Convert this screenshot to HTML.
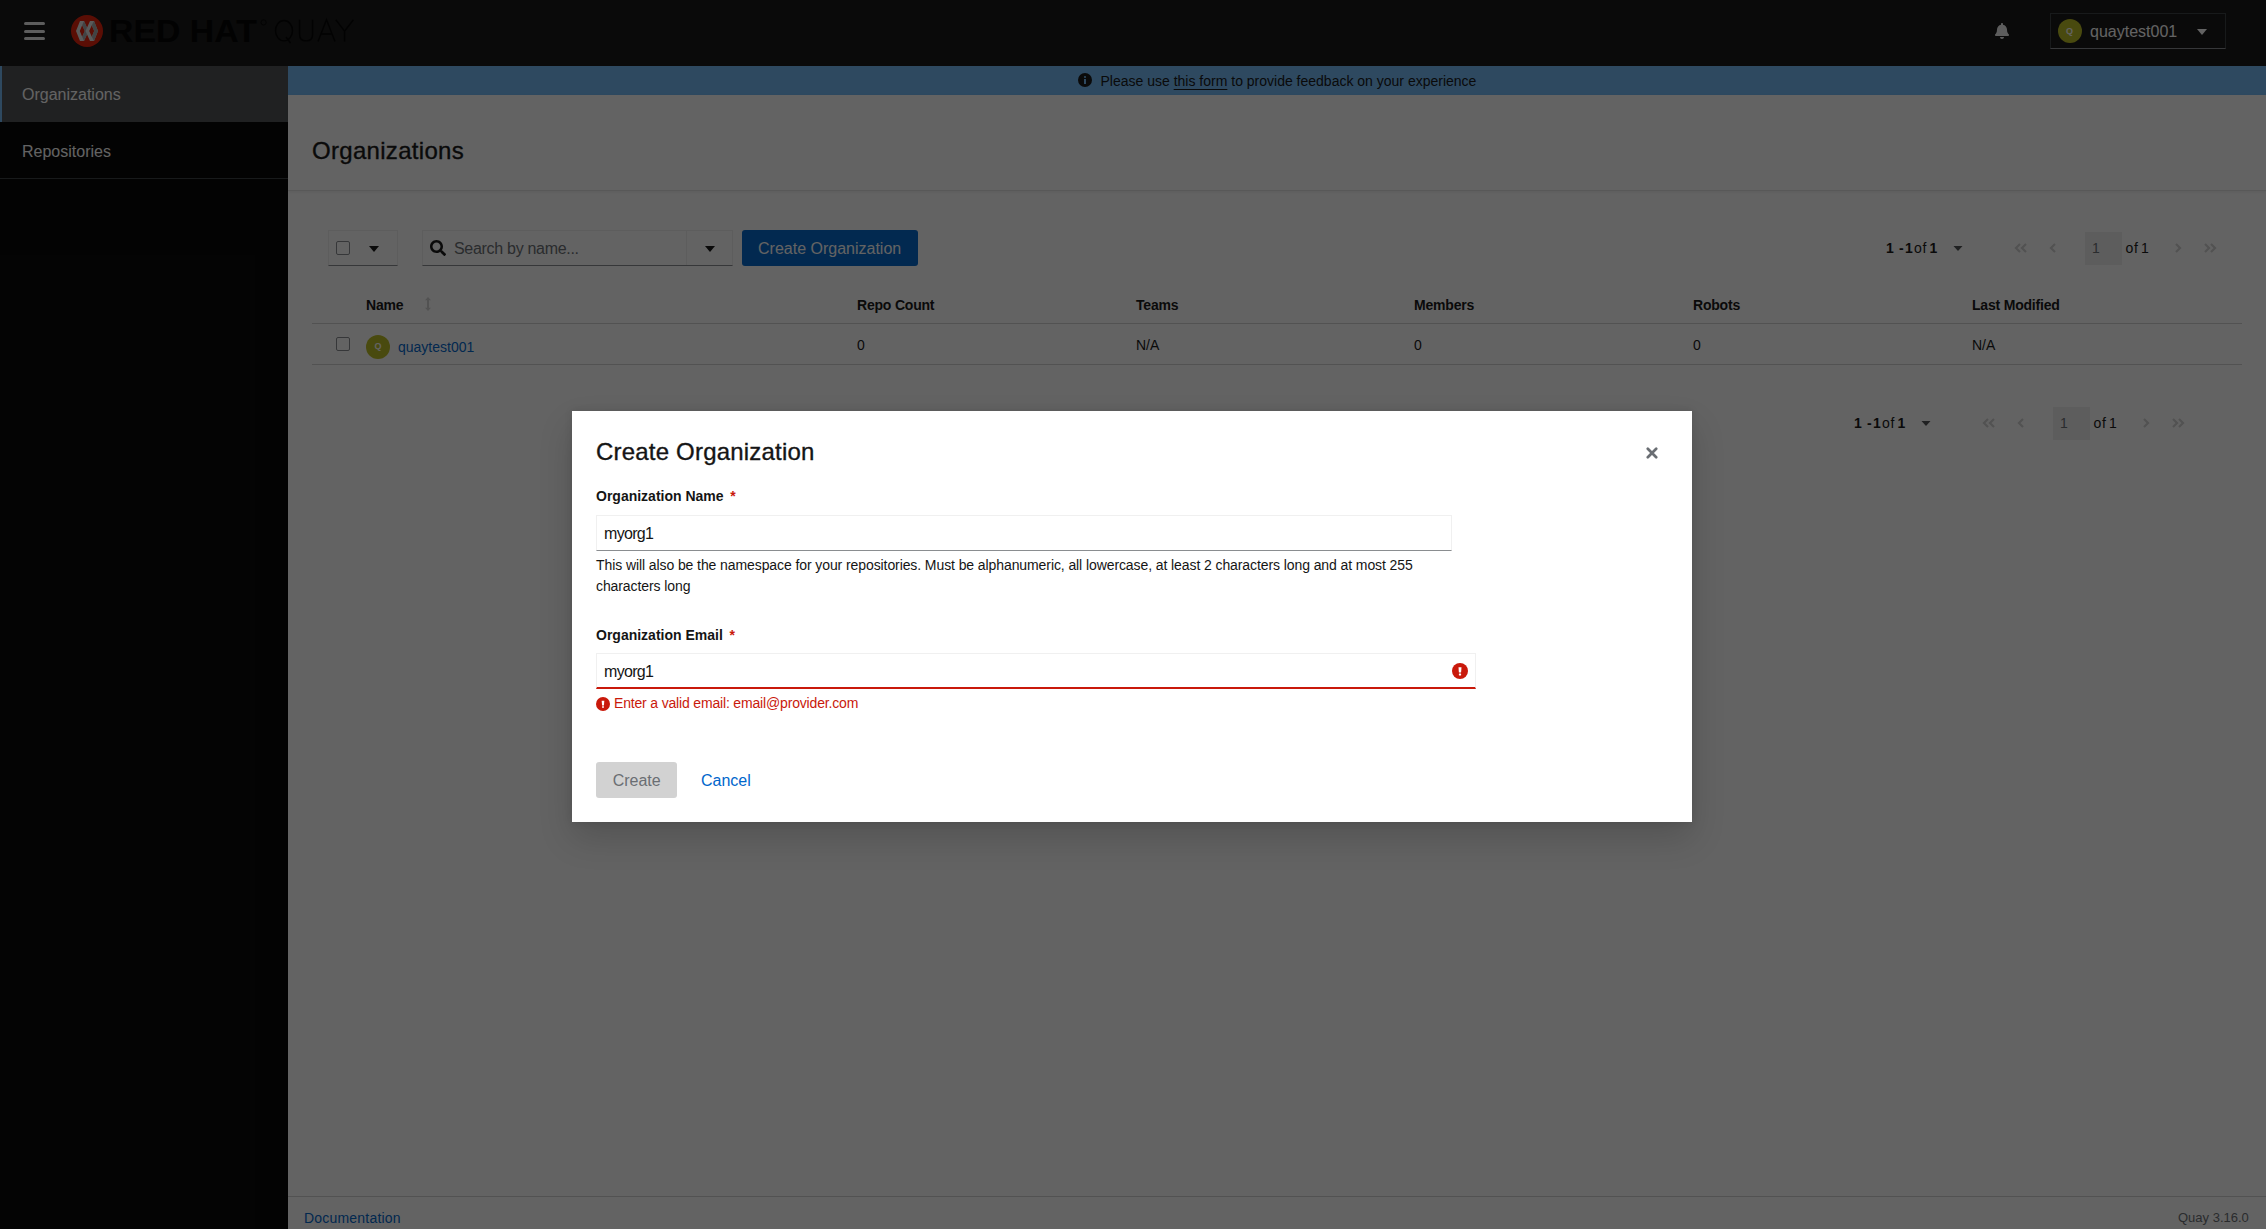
<!DOCTYPE html>
<html><head><meta charset="utf-8"><title>Quay</title>
<style>
*{box-sizing:border-box;margin:0;padding:0}
html,body{width:2266px;height:1229px;overflow:hidden;background:#fff;font-family:"Liberation Sans",sans-serif;color:#151515}
.a{position:absolute}
.t{position:absolute;white-space:nowrap;line-height:1}
#mast{left:0;top:0;width:2266px;height:66px;background:#151515}
#side{left:0;top:66px;width:288px;height:1163px;background:#050505}
#banner{left:288px;top:66px;width:1978px;height:29px;background:#73bcf7}
#titlesec{left:288px;top:95px;width:1978px;height:96px;background:#fff;border-bottom:1px solid #e2e2e2;box-shadow:0 1px 3px rgba(3,3,3,.08)}
#footer{left:288px;top:1196px;width:1978px;height:33px;border-top:1px solid #d2d2d2;background:#fff}
#backdrop{left:0;top:0;width:2266px;height:1229px;background:rgba(3,3,3,.62)}
#modal{left:572px;top:411px;width:1120px;height:411px;background:#fff;box-shadow:0 16px 32px 0 rgba(3,3,3,.16),0 0 8px 0 rgba(3,3,3,.1)}
.cb{position:absolute;width:14px;height:14px;border:1px solid #8a8d90;border-radius:2px;background:#fff}
.hdr{font-size:14px;font-weight:700;letter-spacing:-.2px}
.cell{font-size:14px}
</style></head><body>
<!-- masthead -->
<div id="mast" class="a">
  <div class="a" style="left:23.5px;top:22px;width:21px;height:3px;border-radius:1.5px;background:#f0f0f0"></div>
  <div class="a" style="left:23.5px;top:29.5px;width:21px;height:3px;border-radius:1.5px;background:#f0f0f0"></div>
  <div class="a" style="left:23.5px;top:37px;width:21px;height:3px;border-radius:1.5px;background:#f0f0f0"></div>
  <svg class="a" style="left:66px;top:10px" width="300" height="40" viewBox="0 0 300 40">
    <circle cx="21" cy="21" r="16" fill="#e8200a"/>
    <path d="M10 21L14 11H18L22.5 21L18 31H14ZM13.8 21L16.2 15.2L18.8 21L16.2 26.8Z" fill="#e8e8e8" fill-rule="evenodd"/>
    <path d="M18 11L22.5 21L18 31L16.2 26.8L18.8 21L16.2 15.2Z" fill="#a9abad"/>
    <path d="M32 21L28 11H24L19.5 21L24 31H28ZM28.2 21L25.8 15.2L23.2 21L25.8 26.8Z" fill="#e8e8e8" fill-rule="evenodd"/>
    <path d="M28 11L32 21L28 31L25.8 26.8L28.2 21L25.8 15.2Z" fill="#a9abad"/>
    <text x="43" y="31.6" font-family="Liberation Sans" font-weight="700" font-size="30.5" textLength="147.8" lengthAdjust="spacingAndGlyphs" fill="#000">RED HAT</text>
    <circle cx="197.6" cy="12.4" r="2.6" fill="none" stroke="#000" stroke-width="0.8"/>
    <g fill="none" stroke="#000" stroke-width="1.4">
      <ellipse cx="218" cy="20.7" rx="8.5" ry="10.2"/>
      <path d="M220 27L224.5 33"/>
      <path d="M233.6 9.8V24.5Q233.6 30.9 240.1 30.9Q246.6 30.9 246.6 24.5V9.8"/>
      <path d="M252 31.6L260.5 9.8L269 31.6M255.2 24H265.8"/>
      <path d="M269.8 9.8L278.6 21.2L287.4 9.8M278.6 21.2V31.6"/>
    </g>
  </svg>
  <svg class="a" style="left:1995px;top:23px" width="14" height="16" viewBox="0 0 448 512"><path fill="#f0f0f0" d="M224 512c35.32 0 63.97-28.65 63.97-64H160.03c0 35.35 28.65 64 63.97 64zm215.39-149.71c-19.32-20.76-55.47-51.99-55.47-154.29 0-77.7-54.48-139.9-127.94-155.16V32c0-17.67-14.32-32-31.98-32s-31.98 14.33-31.98 32v20.84C118.56 68.1 64.08 130.3 64.08 208c0 102.3-36.15 133.53-55.47 154.29-6 6.45-8.66 14.16-8.61 21.71.11 16.4 12.98 32 32.1 32h383.8c19.12 0 32-15.6 32.1-32 .05-7.55-2.61-15.27-8.61-21.71z"/></svg>
  <div class="a" style="left:2050px;top:13px;width:176px;height:36px;border:1px solid #3c3f42;border-bottom-color:#8a8d90"></div>
  <div class="a" style="left:2058px;top:19px;width:24px;height:24px;border-radius:50%;background:#bcbd22"></div>
  <div class="t" style="left:2066px;top:27px;font-size:9px;color:#fff;font-weight:700">Q</div>
  <div class="t" style="left:2090px;top:24px;font-size:16px;color:#fff">quaytest001</div>
  <svg class="a" style="left:2197px;top:29px" width="10" height="6" viewBox="0 0 10 6"><path d="M0 0H10L5 6Z" fill="#fff"/></svg>
</div>
<!-- sidebar -->
<div id="side" class="a">
  <div class="a" style="left:0;top:0;width:288px;height:56px;background:#4f5255"></div>
  <div class="a" style="left:0;top:0;width:2px;height:56px;background:#73bcf7"></div>
  <div class="t" style="left:22px;top:21px;font-size:16px;color:#fff">Organizations</div>
  <div class="t" style="left:22px;top:77.5px;font-size:16px;color:#fff">Repositories</div>
  <div class="a" style="left:0;top:112px;width:288px;height:1px;background:#3c3f42"></div>
</div>
<!-- banner -->
<div id="banner" class="a">
  <svg class="a" style="left:790px;top:7px" width="14" height="14" viewBox="0 0 14 14"><circle cx="7" cy="7" r="7" fill="#151515"/><rect x="6" y="6" width="2" height="5" fill="#73bcf7"/><circle cx="7" cy="4" r="1.1" fill="#73bcf7"/></svg>
  <div class="t" style="left:812.5px;top:8px;font-size:14px">Please use <span style="text-decoration:underline;text-underline-offset:3px">this form</span> to provide feedback on your experience</div>
</div>
<!-- title -->
<div id="titlesec" class="a">
  <div class="t" style="left:24px;top:43.7px;font-size:24px;letter-spacing:.3px;-webkit-text-stroke:.35px #151515">Organizations</div>
</div>
<!-- toolbar -->
<div class="a" style="left:328px;top:230px;width:70px;height:36px;border:1px solid #f0f0f0;border-bottom-color:#8a8d90"></div>
<div class="cb" style="left:336px;top:241px"></div>
<svg class="a" style="left:369px;top:246px" width="10" height="6" viewBox="0 0 10 6"><path d="M0 0H10L5 6Z" fill="#151515"/></svg>
<div class="a" style="left:422px;top:230px;width:311px;height:36px;border:1px solid #f0f0f0;border-bottom-color:#8a8d90"></div>
<div class="a" style="left:686px;top:231px;width:1px;height:34px;background:#f0f0f0"></div>
<svg class="a" style="left:430px;top:240px" width="16" height="16" viewBox="0 0 512 512"><path fill="#151515" d="M505 442.7L405.3 343c-4.5-4.5-10.6-7-17-7H372c27.6-35.3 44-79.7 44-128C416 93.1 322.9 0 208 0S0 93.1 0 208s93.1 208 208 208c48.3 0 92.7-16.4 128-44v16.3c0 6.4 2.5 12.5 7 17l99.7 99.7c9.4 9.4 24.6 9.4 33.9 0l28.3-28.3c9.4-9.4 9.4-24.6.1-34zM208 336c-70.7 0-128-57.2-128-128 0-70.7 57.2-128 128-128 70.7 0 128 57.2 128 128 0 70.7-57.2 128-128 128z"/></svg>
<div class="t" style="left:454px;top:240.7px;font-size:16px;color:#6a6e73;letter-spacing:-.3px">Search by name...</div>
<svg class="a" style="left:705px;top:246px" width="10" height="6" viewBox="0 0 10 6"><path d="M0 0H10L5 6Z" fill="#151515"/></svg>
<div class="a" style="left:742px;top:230px;width:176px;height:36px;background:#0066cc;border-radius:3px"></div>
<div class="t" style="left:758px;top:240.5px;font-size:16px;color:#fff">Create Organization</div>

<!-- pagination top -->
<div id="pg1" class="a" style="left:0;top:0">
  <div class="t" style="left:1886px;top:241.2px;font-size:14px;font-weight:700">1</div>
  <div class="t" style="left:1899px;top:241.2px;font-size:14px;font-weight:700">-</div>
  <div class="t" style="left:1905px;top:241.2px;font-size:14px;font-weight:700">1</div>
  <div class="t" style="left:1914px;top:241.2px;font-size:14px;letter-spacing:.6px">of</div>
  <div class="t" style="left:1929.5px;top:241.2px;font-size:14px;font-weight:700">1</div>
  <svg class="a" style="left:1953px;top:246px" width="10" height="5" viewBox="0 0 10 5"><path d="M0.5 0H9.5L5 5Z" fill="#4f5255"/></svg>
  <svg class="a" style="left:2014px;top:243px" width="14" height="10" viewBox="0 0 14 10"><path d="M6 1L2 5L6 9M12 1L8 5L12 9" fill="none" stroke="#d2d2d2" stroke-width="2.2"/></svg>
  <svg class="a" style="left:2049px;top:243px" width="8" height="10" viewBox="0 0 8 10"><path d="M6 1L2 5L6 9" fill="none" stroke="#d2d2d2" stroke-width="2.2"/></svg>
  <div class="a" style="left:2085px;top:232px;width:37px;height:33px;background:#f0f0f0"></div>
  <div class="t" style="left:2092px;top:241.2px;font-size:14px;color:#6a6e73">1</div>
  <div class="t" style="left:2125.5px;top:241.2px;font-size:14px;letter-spacing:.6px">of</div>
  <div class="t" style="left:2141px;top:241.2px;font-size:14px">1</div>
  <svg class="a" style="left:2174px;top:243px" width="8" height="10" viewBox="0 0 8 10"><path d="M2 1L6 5L2 9" fill="none" stroke="#d2d2d2" stroke-width="2.2"/></svg>
  <svg class="a" style="left:2203px;top:243px" width="14" height="10" viewBox="0 0 14 10"><path d="M2 1L6 5L2 9M8 1L12 5L8 9" fill="none" stroke="#d2d2d2" stroke-width="2.2"/></svg>
</div>
</div>

<!-- table -->
<div class="t hdr" style="left:366px;top:298.2px">Name</div>
<svg class="a" style="left:425px;top:297px" width="6" height="14" viewBox="0 0 6 14"><path d="M3 0L6 3.2H4V10.8H6L3 14L0 10.8H2V3.2H0Z" fill="#d2d2d2"/></svg>
<div class="t hdr" style="left:857px;top:298.2px">Repo Count</div>
<div class="t hdr" style="left:1136px;top:298.2px">Teams</div>
<div class="t hdr" style="left:1414px;top:298.2px">Members</div>
<div class="t hdr" style="left:1693px;top:298.2px">Robots</div>
<div class="t hdr" style="left:1972px;top:298.2px">Last Modified</div>
<div class="a" style="left:312px;top:323px;width:1930px;height:1px;background:#d2d2d2"></div>
<div class="cb" style="left:336px;top:337px"></div>
<div class="a" style="left:366px;top:335px;width:24px;height:24px;border-radius:50%;background:#bcbd22"></div>
<div class="t" style="left:374.5px;top:342px;font-size:9px;color:#fff;font-weight:700">Q</div>
<div class="t cell" style="left:398px;top:340.1px;color:#0066cc">quaytest001</div>
<div class="t cell" style="left:857px;top:338.1px">0</div>
<div class="t cell" style="left:1136px;top:338.1px">N/A</div>
<div class="t cell" style="left:1414px;top:338.1px">0</div>
<div class="t cell" style="left:1693px;top:338.1px">0</div>
<div class="t cell" style="left:1972px;top:338.1px">N/A</div>
<div class="a" style="left:312px;top:364px;width:1930px;height:1px;background:#d2d2d2"></div>

<!-- pagination bottom -->
<div id="pg2" class="a" style="left:-32px;top:175px">
  <div class="t" style="left:1886px;top:241.2px;font-size:14px;font-weight:700">1</div>
  <div class="t" style="left:1899px;top:241.2px;font-size:14px;font-weight:700">-</div>
  <div class="t" style="left:1905px;top:241.2px;font-size:14px;font-weight:700">1</div>
  <div class="t" style="left:1914px;top:241.2px;font-size:14px;letter-spacing:.6px">of</div>
  <div class="t" style="left:1929.5px;top:241.2px;font-size:14px;font-weight:700">1</div>
  <svg class="a" style="left:1953px;top:246px" width="10" height="5" viewBox="0 0 10 5"><path d="M0.5 0H9.5L5 5Z" fill="#4f5255"/></svg>
  <svg class="a" style="left:2014px;top:243px" width="14" height="10" viewBox="0 0 14 10"><path d="M6 1L2 5L6 9M12 1L8 5L12 9" fill="none" stroke="#d2d2d2" stroke-width="2.2"/></svg>
  <svg class="a" style="left:2049px;top:243px" width="8" height="10" viewBox="0 0 8 10"><path d="M6 1L2 5L6 9" fill="none" stroke="#d2d2d2" stroke-width="2.2"/></svg>
  <div class="a" style="left:2085px;top:232px;width:37px;height:33px;background:#f0f0f0"></div>
  <div class="t" style="left:2092px;top:241.2px;font-size:14px;color:#6a6e73">1</div>
  <div class="t" style="left:2125.5px;top:241.2px;font-size:14px;letter-spacing:.6px">of</div>
  <div class="t" style="left:2141px;top:241.2px;font-size:14px">1</div>
  <svg class="a" style="left:2174px;top:243px" width="8" height="10" viewBox="0 0 8 10"><path d="M2 1L6 5L2 9" fill="none" stroke="#d2d2d2" stroke-width="2.2"/></svg>
  <svg class="a" style="left:2203px;top:243px" width="14" height="10" viewBox="0 0 14 10"><path d="M2 1L6 5L2 9M8 1L12 5L8 9" fill="none" stroke="#d2d2d2" stroke-width="2.2"/></svg>
</div>
</div>

<!-- footer -->
<div id="footer" class="a">
  <div class="t" style="left:16px;top:14px;font-size:14px;color:#0066cc;letter-spacing:.2px">Documentation</div>
  <div class="t" style="left:1890px;top:14px;font-size:13px;color:#6a6e73">Quay 3.16.0</div>
</div>

<div id="backdrop" class="a"></div>

<!-- modal -->
<div id="modal" class="a">
  <div class="t" style="left:24px;top:29.4px;font-size:24px;letter-spacing:.2px;-webkit-text-stroke:.35px #151515">Create Organization</div>
  <svg class="a" style="left:1074px;top:36px" width="12" height="12" viewBox="0 0 12 12"><path d="M1.8 1.8L10.2 10.2M10.2 1.8L1.8 10.2" stroke="#6a6e73" stroke-width="2.7" stroke-linecap="round"/></svg>
  <div class="t" style="left:24px;top:77.7px;font-size:14px;font-weight:700">Organization Name <span style="color:#c9190b;margin-left:2.7px">*</span></div>
  <div class="a" style="left:24px;top:104px;width:856px;height:36px;border:1px solid #f0f0f0;border-bottom-color:#8a8d90"></div>
  <div class="t" style="left:32px;top:114.5px;font-size:16px;letter-spacing:-.7px">myorg1</div>
  <div class="t" style="left:24px;top:144px;font-size:14px;line-height:21px;white-space:normal;width:900px;letter-spacing:-.09px">This will also be the namespace for your repositories. Must be alphanumeric, all lowercase, at least 2 characters long and at most 255<br>characters long</div>
  <div class="t" style="left:24px;top:216.5px;font-size:14px;font-weight:700">Organization Email <span style="color:#c9190b;margin-left:2.7px">*</span></div>
  <div class="a" style="left:24px;top:242px;width:880px;height:36px;border:1px solid #f0f0f0;border-bottom:2px solid #c9190b"></div>
  <div class="t" style="left:32px;top:252.5px;font-size:16px;letter-spacing:-.7px">myorg1</div>
  <svg class="a" style="left:880px;top:252px" width="16" height="16" viewBox="0 0 16 16"><circle cx="8" cy="8" r="8" fill="#c9190b"/><path d="M6.5 4.3H9.5L9.1 9.6H6.9Z" fill="#fff"/><rect x="6.9" y="10.6" width="2.2" height="1.8" rx=".3" fill="#fff"/></svg>
  <svg class="a" style="left:24px;top:285.5px" width="14" height="14" viewBox="0 0 16 16"><circle cx="8" cy="8" r="8" fill="#c9190b"/><path d="M6.5 4.3H9.5L9.1 9.6H6.9Z" fill="#fff"/><rect x="6.9" y="10.6" width="2.2" height="1.8" rx=".3" fill="#fff"/></svg>
  <div class="t" style="left:42px;top:285.4px;font-size:14px;color:#c9190b;letter-spacing:-.17px">Enter a valid email: email@provider.com</div>
  <div class="a" style="left:24px;top:351px;width:81px;height:36px;background:#d2d2d2;border-radius:3px"></div>
  <div class="t" style="left:40.7px;top:361.6px;font-size:16px;color:#6a6e73">Create</div>
  <div class="t" style="left:129px;top:361.6px;font-size:16px;color:#0066cc">Cancel</div>
</div>
</body></html>
